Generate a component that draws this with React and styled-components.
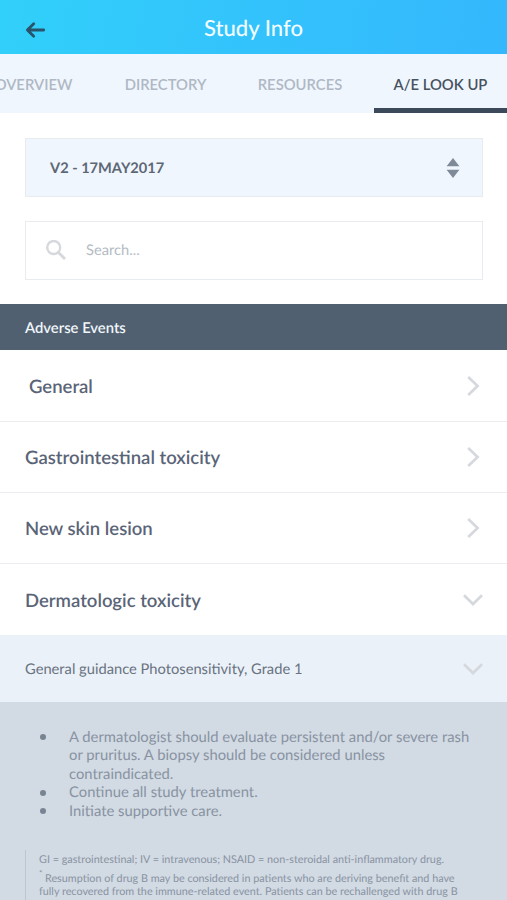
import React from 'react';
import styled, { createGlobalStyle } from 'styled-components';

const GlobalStyle = createGlobalStyle`
  * { box-sizing: border-box; }
  body {
    margin: 0;
    background: #fff;
    font-family: Lato, "Open Sans", sans-serif;
    text-rendering: geometricPrecision;
  }
`;

const Screen = styled.main`
  display: flex;
  flex-direction: column;
  width: 507px;
  height: 900px;
  overflow: hidden;
  background: #fff;
`;

const Header = styled.header`
  display: grid;
  grid-template-columns: 72px 1fr 72px;
  align-items: center;
  flex: none;
  height: 54px;
  background: linear-gradient(100deg, #31d0fa 0%, #33c4fc 45%, #34b7fd 100%);
`;

const BackButton = styled.button`
  display: flex;
  padding: 5px 0 0 25px;
  border: 0;
  background: none;
`;

const Title = styled.h1`
  margin: 0;
  color: #f1fdff;
  font-size: 22.1px;
  font-weight: 500;
  line-height: 55px;
  text-align: center;
`;

const Tabs = styled.nav`
  display: flex;
  flex: none;
  height: 59px;
  background: #f0f6fe;
`;

const Tab = styled.button`
  display: flex;
  align-items: center;
  justify-content: center;
  flex: none;
  width: ${(p) => p.$width}px;
  margin-left: ${(p) => p.$offset || 0}px;
  padding: 5px 0 0;
  border: 0;
  border-bottom: 5px solid ${(p) => (p.$active ? '#3c495b' : 'transparent')};
  background: none;
  color: ${(p) => (p.$active ? '#48525f' : '#afb8c4')};
  font: 600 14.8px Lato, sans-serif;
  white-space: nowrap;
`;

const Filters = styled.section`
  display: flex;
  flex-direction: column;
  flex: none;
  gap: 24px;
  padding: 25px 24px 24px 25px;
`;

const Field = styled.div`
  display: flex;
  align-items: center;
  height: 59px;
  border: 1px solid #e8ecf0;
`;

const VersionSelect = styled(Field)`
  justify-content: space-between;
  padding: 1px 22px 0 24px;
  background: #f0f6fe;
  color: #5d6774;
  font-size: 14.6px;
  font-weight: 700;
`;

const SearchField = styled(Field)`
  gap: 20px;
  padding: 0 20px 2px;
  color: #b4bbc4;
  font-size: 14.7px;
`;

const SectionTitle = styled.h2`
  flex: none;
  height: 46.4px;
  margin: 0;
  padding-left: 25px;
  background: #506070;
  color: #f1f6fb;
  font-size: 14.8px;
  font-weight: 600;
  line-height: 48px;
`;

const EventRow = styled.div`
  display: flex;
  align-items: center;
  justify-content: space-between;
  flex: none;
  height: ${(p) => (p.$last ? 70.6 : 71.2)}px;
  padding: 1px 24px 0 ${(p) => (p.$indented ? 29 : 25)}px;
  border-bottom: ${(p) => (p.$last ? 0 : 1)}px solid #ebecef;
  color: #5a6477;
  font-size: 18.5px;
  font-weight: 600;
`;

const GuidanceRow = styled.div`
  display: flex;
  align-items: center;
  justify-content: space-between;
  flex: none;
  height: 67.4px;
  padding: 2px 24px 0 25px;
  background: #ebf1f9;
  color: #69737f;
  font-size: 14.7px;
`;

const Details = styled.section`
  flex: 1;
  padding: 26px 25px 0;
  background: #d2dae4;
  color: #8893a1;
`;

const AdviceList = styled.ul`
  margin: 0;
  padding: 0;
  list-style: none;
  font-size: 14.8px;
  line-height: 18.4px;
`;

const AdviceItem = styled.li`
  display: grid;
  grid-template-columns: 44px 1fr;
  white-space: pre;

  &::before {
    content: '';
    width: 6px;
    height: 6px;
    margin: 6.5px 0 0 15px;
    border-radius: 50%;
    background: #798493;
  }
`;

const Footnotes = styled.aside`
  height: 80px;
  margin-top: 30px;
  padding-left: 13px;
  border-left: 1px solid #bcc5d0;
  font-size: 10.8px;
  line-height: 13.7px;
  white-space: nowrap;
`;

const Note = styled.p`
  margin: 0;
  padding-top: ${(p) => (p.$spaced ? 5 : 3)}px;
`;

const Marker = styled.sup`
  display: inline-block;
  width: 6px;
  font-size: 8px;
  line-height: 0;
  vertical-align: 6px;
`;

const BackIcon = () => (
  <svg width="22" height="18" viewBox="0 0 22 18" fill="none" stroke="#28536b" strokeWidth="2.8" strokeLinecap="round" strokeLinejoin="round">
    <path d="M18.7 9H2.6M8.7 2.7 2.4 9l6.3 6.3" />
  </svg>
);

const SortIcon = () => (
  <svg width="14" height="20" viewBox="0 0 14 20" fill="#7f8a99">
    <path d="M7 0 13.4 8.3H.6zM7 20 .6 11.8h12.8z" />
  </svg>
);

const SearchIcon = () => (
  <svg width="20" height="20" viewBox="0 0 20 20" fill="none" stroke="#d5d9dd" strokeWidth="2.4">
    <circle cx="7.7" cy="7.5" r="6.5" />
    <path d="m12.2 12.2 6.8 6.8" strokeWidth="2.9" />
  </svg>
);

const Chevron = ({ down }) => (
  <svg width="20" height="20" viewBox="0 0 20 20" fill="none" stroke="#d5d8dd" strokeWidth="2.7">
    <path d={down ? 'M1 5.2 10 14l9-8.8' : 'M5.2 1 14.6 10l-9.4 9'} />
  </svg>
);

const tabs = [
  { label: 'OVERVIEW', width: 99, offset: -16 },
  { label: 'DIRECTORY', width: 133, offset: 16 },
  { label: 'RESOURCES', width: 136 },
  { label: 'A/E LOOK UP', width: 133, offset: 6, active: true },
];

const events = [
  { name: 'General', indented: true },
  { name: 'Gastrointestinal toxicity' },
  { name: 'New skin lesion' },
  { name: 'Dermatologic toxicity', open: true },
];

export default function App() {
  return (
    <Screen>
      <GlobalStyle />
      <Header>
        <BackButton aria-label="Back"><BackIcon /></BackButton>
        <Title>Study Info</Title>
      </Header>
      <Tabs>
        {tabs.map((tab) => (
          <Tab key={tab.label} $width={tab.width} $offset={tab.offset} $active={tab.active}>
            {tab.label}
          </Tab>
        ))}
      </Tabs>
      <Filters>
        <VersionSelect>V2 - 17MAY2017<SortIcon /></VersionSelect>
        <SearchField><SearchIcon />Search...</SearchField>
      </Filters>
      <SectionTitle>Adverse Events</SectionTitle>
      {events.map((event) => (
        <EventRow key={event.name} $indented={event.indented} $last={event.open}>
          {event.name}
          <Chevron down={event.open} />
        </EventRow>
      ))}
      <GuidanceRow>General guidance Photosensitivity, Grade 1<Chevron down /></GuidanceRow>
      <Details>
        <AdviceList>
          <AdviceItem>{'A dermatologist should evaluate persistent and/or severe rash\nor pruritus. A biopsy should be considered unless\ncontraindicated.'}</AdviceItem>
          <AdviceItem>Continue all study treatment.</AdviceItem>
          <AdviceItem>Initiate supportive care.</AdviceItem>
        </AdviceList>
        <Footnotes>
          <Note>GI = gastrointestinal; IV = intravenous; NSAID = non-steroidal anti-inflammatory drug.</Note>
          <Note $spaced>
            <Marker>*</Marker>Resumption of drug B may be considered in patients who are deriving benefit and have
            <br />
            fully recovered from the immune-related event. Patients can be rechallenged with drug B
          </Note>
        </Footnotes>
      </Details>
    </Screen>
  );
}
